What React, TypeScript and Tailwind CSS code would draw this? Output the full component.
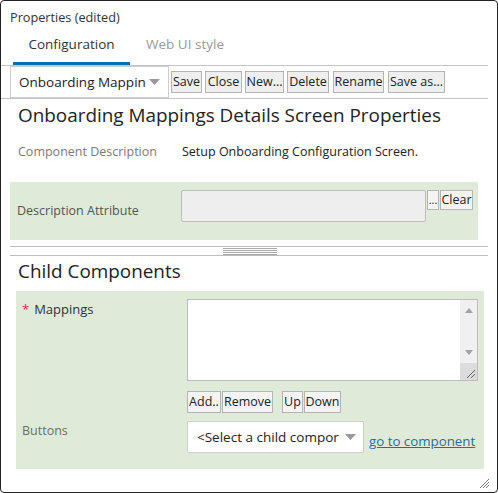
import React from 'react';

// ─── 小部件 ──────────────────────────────────────────────

function Btn({ label, className = '' }: { label: string; className?: string }) {
  return (
    <button
      className={
        'h-[22px] whitespace-nowrap border border-[#b4b4b4] bg-[#efefef] px-0 text-[12.5px] leading-[20px] text-[#222] ' +
        className
      }
    >
      {label}
    </button>
  );
}

function Caret() {
  return (
    <svg width="11" height="6" viewBox="0 0 11 6" className="shrink-0">
      <path d="M0 0h11L5.5 6z" fill="#999" />
    </svg>
  );
}

// ─── 组件 ──────────────────────────────────────────────────

export default function App() {
  return (
    <div
      className="relative h-[493px] w-[498px] overflow-hidden rounded-[4px] border border-[#222] bg-white text-[#333]"
      style={{ fontFamily: '"Open Sans", "Noto Sans", sans-serif' }}
    >
      {/* 标题 */}
      <div className="pl-[9px] pt-[6px] text-[12.7px] leading-[20px] text-[#333]">Properties (edited)</div>

      {/* 选项卡 */}
      <div className="ml-[12px] mt-[6px] flex h-[32px]">
        <div className="flex w-[117px] items-start justify-center border-b-[3px] border-[#0b6db1] pt-[1px] text-[13.5px] text-[#333]">
          Configuration
        </div>
        <div className="flex w-[110px] items-start justify-center pt-[1px] text-[13.5px] text-[#999]">Web UI style</div>
      </div>

      {/* 工具栏 */}
      <div className="mr-[9px] flex h-[34px] items-center border-y border-[#c4c4c4] pl-[9px]">
        <div className="flex h-[32px] w-[159px] items-center justify-between self-start border border-[#cfcfcf] bg-white pl-[8px] pr-[8px]">
          <span className="whitespace-nowrap text-[13.5px] text-[#222]">Onboarding Mappin</span>
          <Caret />
        </div>
        <div className="ml-[2px] flex gap-[3px]">
          <Btn label="Save" className="w-[31px]" />
          <Btn label="Close" className="w-[37px]" />
          <Btn label="New..." className="w-[39px]" />
          <Btn label="Delete" className="w-[42px]" />
          <Btn label="Rename" className="ml-[1px] w-[51px]" />
          <Btn label="Save as..." className="ml-[1px] w-[57px]" />
        </div>
      </div>

      {/* 标题 */}
      <div className="whitespace-nowrap pl-[17px] pt-[2px] text-[18.9px] leading-[28px] text-[#222]">
        Onboarding Mappings Details Screen Properties
      </div>

      <div className="mt-[13px] flex pl-[17px] text-[12.5px] leading-[20px]">
        <span className="w-[164px] text-[#7a7a7a]">Component Description</span>
        <span className="text-[#222]">Setup Onboarding Configuration Screen.</span>
      </div>

      {/* 描述属性 */}
      <div className="ml-[9px] mt-[20px] flex h-[58px] w-[468px] items-start bg-[#dfead8] pt-[8px]">
        <span className="mt-[12px] w-[171px] pl-[7px] text-[12.5px] text-[#555]">Description Attribute</span>
        <div className="h-[32px] w-[245px] rounded-[2px] border border-[#bdbdbd] bg-[#eeeeee]" />
        <button className="ml-[1px] h-[20px] w-[12px] border border-[#b4b4b4] bg-[#f4f4f4] text-[11px] leading-[14px] text-[#222]">
          ...
        </button>
        <button className="ml-[1px] h-[20px] w-[33px] whitespace-nowrap border border-[#b4b4b4] bg-[#f4f4f4] text-[12.5px] leading-[18px] text-[#222]">
          Clear
        </button>
      </div>

      {/* 分隔条 */}
      <div className="relative ml-[9px] mr-[9px] mt-[6px] h-[10px] border-y border-[#bdbdbd]">
        <div className="absolute left-[213px] top-[1px] flex w-[54px] flex-col gap-[1px]">
          <div className="h-[1px] bg-[#a8a8a8]" />
          <div className="h-[1px] bg-[#a8a8a8]" />
          <div className="h-[1px] bg-[#a8a8a8]" />
          <div className="h-[1px] bg-[#a8a8a8]" />
        </div>
      </div>

      {/* 子组件 */}
      <div className="pl-[17px] pt-[3px] text-[18.9px] leading-[24px] text-[#222]">Child Components</div>

      <div className="ml-[15px] mt-[8px] h-[178px] w-[468px] bg-[#dfead8] pt-[8px]">
        <div className="flex">
          <div className="flex w-[171px] items-start pl-[6px] pt-[1px] text-[13px]">
            <span className="mr-[5px] text-[#e0306a]">*</span>
            <span className="text-[#333]">Mappings</span>
          </div>
          <div className="flex h-[82px] w-[291px] border border-[#bdbdbd] bg-white">
            <div className="flex-1" />
            <div className="flex w-[17px] flex-col items-center bg-[#f0f0f0]">
              <svg width="8" height="5" viewBox="0 0 8 5" className="mt-[8px]">
                <path d="M0 5L4 0l4 5z" fill="#a3a3a3" />
              </svg>
              <div className="flex-1" />
              <svg width="8" height="5" viewBox="0 0 8 5" className="mb-[8px]">
                <path d="M0 0h8L4 5z" fill="#a3a3a3" />
              </svg>
              <div className="flex h-[17px] w-[17px] items-end justify-end bg-[#dcdcdc] p-[2px]">
                <svg width="10" height="10" viewBox="0 0 10 10">
                  <path d="M2 10L10 2M6 10l4-4" stroke="#666" strokeWidth="1" />
                </svg>
              </div>
            </div>
          </div>
        </div>

        <div className="ml-[171px] mt-[10px] flex">
          <Btn label="Add.." className="h-[21px] w-[34px] bg-[#f4f4f4] leading-[18px]" />
          <Btn label="Remove" className="ml-[1px] h-[21px] w-[51px] bg-[#f4f4f4] leading-[18px]" />
          <Btn label="Up" className="ml-[9px] h-[21px] w-[21px] bg-[#f4f4f4] leading-[18px]" />
          <Btn label="Down" className="ml-[1px] h-[21px] w-[37px] bg-[#f4f4f4] leading-[18px]" />
        </div>

        <div className="mt-[8px] flex items-start">
          <span className="w-[171px] pl-[6px] pt-[1px] text-[12.5px] text-[#6f6f5c]">Buttons</span>
          <div className="flex h-[32px] w-[177px] items-center justify-between rounded-[2px] border border-[#cfcfcf] bg-white pl-[9px] pr-[7px]">
            <span className="overflow-hidden whitespace-nowrap text-[13.5px] text-[#222]">&lt;Select a child compor</span>
            <Caret />
          </div>
          <a className="ml-[5px] mt-[11px] text-[13.3px] text-[#1a6eb3] underline">go to component</a>
        </div>
      </div>

      {/* 调整大小手柄 */}
      <svg width="10" height="10" viewBox="0 0 10 10" className="absolute bottom-[4px] right-[8px]">
        <path d="M1 10L10 1M4 10l6-6M7 10l3-3" stroke="#777" strokeWidth="1" />
      </svg>
    </div>
  );
}
